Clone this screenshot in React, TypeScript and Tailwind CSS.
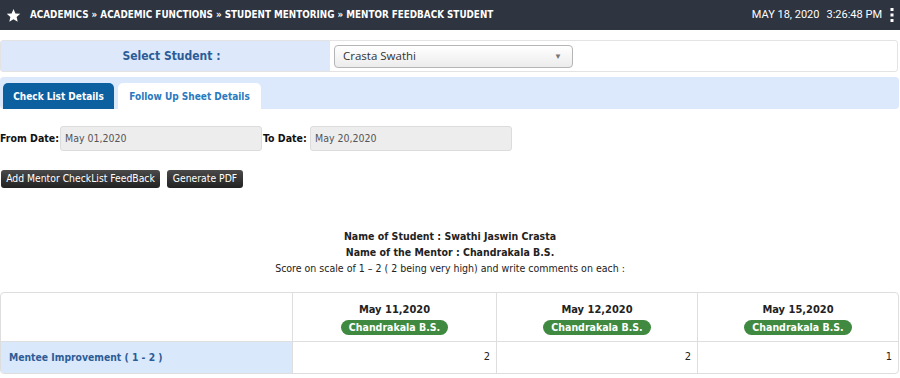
import React from "react";

const F = { fontFamily: '"DejaVu Sans Condensed", "DejaVu Sans", Verdana, sans-serif' };

function Badge() {
  return (
    <span className="inline-block rounded-full bg-[#3f8a40] px-[8px] h-[15px] leading-[15px] text-[10.5px] font-bold text-white">
      Chandrakala B.S.
    </span>
  );
}

export default function App() {
  const cols = [
    { d: "May 11,2020", v: "2" },
    { d: "May 12,2020", v: "2" },
    { d: "May 15,2020", v: "1" },
  ];
  return (
    <div className="w-[900px] h-[378px] overflow-hidden bg-white text-[#222]" style={F}>
      {/* header */}
      <div className="h-[30px] bg-[#2e3440] flex items-center pl-[6px] pr-[6px] text-white">
        <svg width="15" height="15" viewBox="0 0 24 24" className="mr-[9px]">
          <path fill="#fff" d="M12 1.5l3.1 7.1 7.7.7-5.8 5.1 1.7 7.6L12 18.1 5.3 22l1.7-7.6L1.2 9.3l7.7-.7z" />
        </svg>
        <div className="text-[9.8px] font-bold whitespace-nowrap">
          ACADEMICS » ACADEMIC FUNCTIONS » STUDENT MENTORING » MENTOR FEEDBACK STUDENT
        </div>
        <div className="ml-auto flex items-center text-[11px] whitespace-nowrap" style={{ fontFamily: 'Roboto, sans-serif' }}>
          <span>MAY 18, 2020</span>
          <span className="ml-[7px]">3:26:48 PM</span>
          <svg width="4" height="14" viewBox="0 0 4 14" className="ml-[8px]">
            <rect x="0.5" y="0" width="3" height="3" fill="#fff" />
            <rect x="0.5" y="5.5" width="3" height="3" fill="#fff" />
            <rect x="0.5" y="11" width="3" height="3" fill="#fff" />
          </svg>
        </div>
      </div>

      {/* select row */}
      <div className="mt-[10px] mr-[2px] h-[32px] border border-[#e3e3e3] rounded-[3px] flex">
        <div className="w-[329px] bg-[#dde9fb] flex items-center justify-center pl-[12px] text-[12px] font-bold text-[#2c5c96]">
          Select Student :
        </div>
        <div className="flex items-center pl-[4px]">
          <div
            className="w-[239px] h-[23px] rounded-[4px] border border-[#b5b5b5] bg-gradient-to-b from-white to-[#ececec] flex items-center pl-[8px] pr-[10px] text-[11.5px] text-[#333]"
            style={{ fontFamily: '"Open Sans", sans-serif' }}
          >
            <span>Crasta Swathi</span>
            <span className="ml-auto text-[8px] text-[#777]">▼</span>
          </div>
        </div>
      </div>

      {/* tabs */}
      <div className="mt-[5px] mr-[1px] h-[32px] bg-[#dce8fb] rounded-[4px] flex items-end pl-[3px] gap-[4px]">
        <div className="h-[26px] w-[111px] bg-[#0d609f] rounded-t-[5px] flex items-center justify-center text-[10px] font-bold text-white whitespace-nowrap">
          Check List Details
        </div>
        <div className="h-[26px] w-[143px] bg-white rounded-t-[5px] flex items-center justify-center text-[10px] font-bold text-[#2a7ac0] whitespace-nowrap">
          Follow Up Sheet Details
        </div>
      </div>

      {/* dates */}
      <div className="mt-[17px] flex items-center text-[10.5px] whitespace-nowrap">
        <span className="font-bold text-[#111] w-[60px]">From Date:</span>
        <div className="w-[202px] h-[25px] bg-[#ededed] border border-[#dcdcdc] rounded-[3px] flex items-center pl-[4px] text-[#555]">
          May 01,2020
        </div>
        <span className="font-bold text-[#111] ml-[1px] w-[47px]">To Date:</span>
        <div className="w-[202px] h-[25px] bg-[#ededed] border border-[#dcdcdc] rounded-[3px] flex items-center pl-[4px] text-[#555]">
          May 20,2020
        </div>
      </div>

      {/* buttons */}
      <div className="mt-[19px] flex gap-[7px] pl-[1px] whitespace-nowrap">
        <div className="h-[18px] w-[159px] justify-center rounded-[3px] bg-gradient-to-b from-[#4a4a4a] to-[#222] text-white text-[10.3px] flex items-center">
          Add Mentor CheckList FeedBack
        </div>
        <div className="h-[18px] w-[76px] justify-center rounded-[3px] bg-gradient-to-b from-[#4a4a4a] to-[#222] text-white text-[10.3px] flex items-center">
          Generate PDF
        </div>
      </div>

      {/* info */}
      <div className="mt-[40px] text-center text-[10.5px] leading-[16px]">
        <div className="font-bold text-[#222]">Name of Student : Swathi Jaswin Crasta</div>
        <div className="font-bold text-[#222]">Name of the Mentor : Chandrakala B.S.</div>
        <div className="text-[#222]">Score on scale of 1 – 2 ( 2 being very high) and write comments on each :</div>
      </div>

      {/* table */}
      <div className="mt-[16px] mr-[1px] border border-[#dedede] rounded-[4px] overflow-hidden text-[11px]">
        <div className="grid grid-cols-[291px_204px_201px_1fr] h-[49px] border-b border-[#dedede]">
          <div />
          {cols.map((c) => (
            <div key={c.d} className="border-l border-[#dedede] flex flex-col items-center justify-center gap-[1px] pt-[3px]">
              <div className="font-bold text-[#222]">{c.d}</div>
              <Badge />
            </div>
          ))}
        </div>
        <div className="grid grid-cols-[291px_204px_201px_1fr] h-[31px]">
          <div className="bg-[#dae8fb] flex items-center pl-[8px] font-bold text-[#2c5c96] text-[10.3px]">
            Mentee Improvement ( 1 - 2 )
          </div>
          {cols.map((c) => (
            <div key={c.d} className="border-l border-[#dedede] flex items-center justify-end pr-[6px] text-[#222]">
              {c.v}
            </div>
          ))}
        </div>
      </div>
    </div>
  );
}
